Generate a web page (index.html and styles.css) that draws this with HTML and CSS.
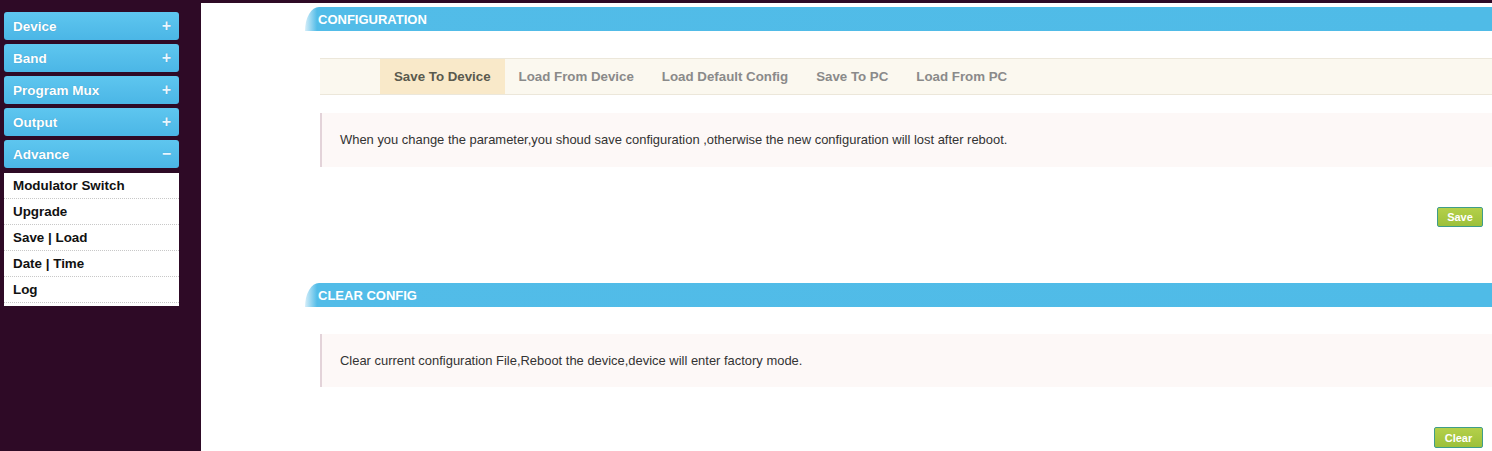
FILE: index.html
```html
<!DOCTYPE html>
<html>
<head>
<meta charset="utf-8">
<link rel="stylesheet" href="styles.css">
</head>
<body>
<div class="page">
  <nav class="sidebar">
    <div class="menu-btn"><span>Device</span><span class="sign">+</span></div>
    <div class="menu-btn"><span>Band</span><span class="sign">+</span></div>
    <div class="menu-btn"><span>Program Mux</span><span class="sign">+</span></div>
    <div class="menu-btn"><span>Output</span><span class="sign">+</span></div>
    <div class="menu-btn"><span>Advance</span><span class="sign minus">&minus;</span></div>
    <ul class="submenu">
      <li>Modulator Switch</li>
      <li>Upgrade</li>
      <li>Save | Load</li>
      <li>Date | Time</li>
      <li>Log</li>
    </ul>
  </nav>
  <main class="main">
    <section class="section">
      <h2 class="bar">CONFIGURATION</h2>
      <div class="body">
        <div class="tabs">
          <span class="tab active">Save To Device</span>
          <span class="tab">Load From Device</span>
          <span class="tab">Load Default Config</span>
          <span class="tab">Save To PC</span>
          <span class="tab">Load From PC</span>
        </div>
        <div class="note">When you change the parameter,you shoud save configuration ,otherwise the new configuration will lost after reboot.</div>
        <div class="actions"><button class="btn">Save</button></div>
      </div>
    </section>
    <section class="section second">
      <h2 class="bar">CLEAR CONFIG</h2>
      <div class="body">
        <div class="note note2">Clear current configuration File,Reboot the device,device will enter factory mode.</div>
        <div class="actions"><button class="btn btn-clear">Clear</button></div>
      </div>
    </section>
  </main>
</div>
</body>
</html>
```

FILE: styles.css
```css
html, body {
  margin: 0;
  padding: 0;
  height: 100%;
}
body {
  background: #2e0a26;
  font-family: "Liberation Sans", Arial, sans-serif;
  overflow: hidden;
}
.page {
  display: flex;
  min-height: 451px;
}
.sidebar {
  width: 175px;
  padding: 12px 22px 0 4px;
  flex: none;
}
.menu-btn {
  height: 28px;
  margin-bottom: 4px;
  border-radius: 3px;
  background: linear-gradient(#5ec6ef, #4bb6e6);
  color: #fff;
  font-weight: bold;
  font-size: 13.5px;
  display: flex;
  align-items: center;
  justify-content: space-between;
  padding: 0 8px 0 9px;
  box-sizing: border-box;
  text-shadow: 0 0 1px rgba(0,60,100,0.3);
}
.menu-btn:nth-child(5) {
  margin-top: 1px;
}
.sign {
  font-size: 16px;
  font-weight: bold;
  color: #e8f6ff;
  line-height: 1;
}
.submenu {
  list-style: none;
  margin: 5px 0 0 0;
  padding: 0 0 3px 0;
  background: #fff;
}
.submenu li {
  height: 26px;
  line-height: 25px;
  padding-left: 9px;
  font-size: 13.4px;
  font-weight: bold;
  color: #111;
  border-bottom: 1px dotted #c8c8c8;
  box-sizing: border-box;
}
.main {
  flex: 1;
  background: #fff;
  margin-top: 3px;
  padding-left: 104px;
  padding-top: 4px;
}
.bar {
  margin: 0;
  height: 24px;
  line-height: 26px;
  font-size: 13px;
  font-weight: bold;
  color: #fff;
  padding-left: 13px;
  border-top-left-radius: 14px 24px;
  background: linear-gradient(90deg, #d6eef9 0px, #52bce8 12px, #4fbbe7 100%);
}
.body {
  padding-left: 15px;
}
.tabs {
  margin-top: 27px;
  height: 35px;
  border-top: 1px solid #ece7da;
  border-bottom: 1px solid #ece7da;
  background: #fbf8ef;
  display: flex;
  padding-left: 60px;
}
.tab {
  padding: 0 14px;
  line-height: 35px;
  font-size: 13.3px;
  font-weight: bold;
  color: #8a8a8a;
}
.tab.active {
  background: #f9e9c9;
  color: #5a5a4e;
}
.note {
  margin-top: 18px;
  height: 54px;
  line-height: 54px;
  border-left: 2px solid #e3d3d9;
  background: #fdf8f7;
  padding-left: 18px;
  font-size: 12.95px;
  color: #333;
}
.actions {
  display: flex;
  justify-content: flex-end;
  padding: 40px 9px 0 0;
}
.btn {
  width: 46px;
  height: 20px;
  padding: 0;
  border: 1px solid #3f9c8a;
  border-radius: 2px;
  background: linear-gradient(#b4d04a, #9cc03a);
  color: #fff;
  font-family: "Liberation Sans", Arial, sans-serif;
  font-size: 11px;
  font-weight: bold;
}
.btn-clear {
  width: 49px;
  height: 21px;
}
.second {
  margin-top: 56px;
}
.note2 {
  margin-top: 27px;
  height: 53px;
  line-height: 53px;
}
```
